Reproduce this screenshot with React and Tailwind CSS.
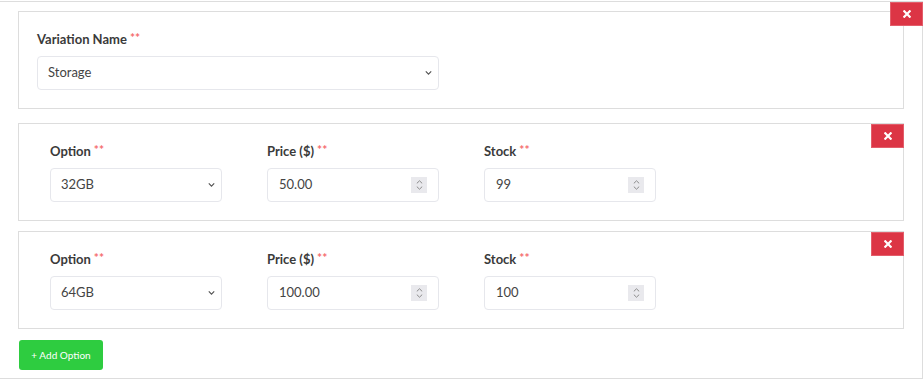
import React from 'react';

const Required = () => (
  <span className="relative top-[-2px] ml-[3px] text-[12px] font-bold text-[#f56c6c]">**</span>
);

const RemoveButton = () => (
  <button
    type="button"
    className="absolute top-0 right-[-1px] flex h-[24px] w-[33px] items-center justify-center border border-[#e35d6a] bg-[#dc3545]"
    title="Remove"
  >
    <svg width="8" height="8" viewBox="0 0 8 8">
      <path d="M1.3 1.3 L6.7 6.7 M6.7 1.3 L1.3 6.7" stroke="#fff" strokeWidth="2.2" strokeLinecap="square" />
    </svg>
  </button>
);

const Chevron = () => (
  <svg className="pointer-events-none absolute right-[6px] top-1/2 -translate-y-1/2" width="7" height="5" viewBox="0 0 7 5">
    <path d="M0.8 0.8 L3.5 3.6 L6.2 0.8" fill="none" stroke="#555" strokeWidth="1.2" />
  </svg>
);

const Spinner = () => (
  <span className="pointer-events-none absolute right-[11px] top-1/2 flex h-[16px] w-[16px] -translate-y-1/2 flex-col items-center justify-center gap-[2px] bg-[#e9e9ed]">
    <svg width="7" height="4" viewBox="0 0 7 4">
      <path d="M0.8 3.4 L3.5 0.8 L6.2 3.4" fill="none" stroke="#8a8a8a" strokeWidth="1" />
    </svg>
    <svg width="7" height="4" viewBox="0 0 7 4">
      <path d="M0.8 0.6 L3.5 3.2 L6.2 0.6" fill="none" stroke="#8a8a8a" strokeWidth="1" />
    </svg>
  </span>
);

const Label = ({ children }) => (
  <label className="mb-[8px] block h-[18px] text-[13px] font-bold leading-[18px] text-[#3a3a3a]">
    {children}
    <Required />
  </label>
);

const SelectField = ({ value, width }) => (
  <div className={`relative ${width} h-[34px] rounded-[4px] border border-[#e6e7ec] bg-white`}>
    <div className="flex h-full items-center pl-[10px] text-[13px] text-[#444]">{value}</div>
    <Chevron />
  </div>
);

const NumberField = ({ value }) => (
  <div className="relative h-[34px] w-[172px] rounded-[4px] border border-[#e6e7ec] bg-white">
    <div className="flex h-full items-center pl-[11px] text-[13px] text-[#444]">{value}</div>
    <Spinner />
  </div>
);

const OptionCard = ({ option, price, stock }) => (
  <div className="relative h-[98px] border border-[#dddddd] bg-white pl-[31px] pt-[18px]">
    <div className="grid grid-cols-[172px_172px_172px] gap-x-[45px]">
      <div>
        <Label>Option</Label>
        <SelectField value={option} width="w-[172px]" />
      </div>
      <div>
        <Label>Price ($)</Label>
        <NumberField value={price} />
      </div>
      <div>
        <Label>Stock</Label>
        <NumberField value={stock} />
      </div>
    </div>
    <RemoveButton />
  </div>
);

export default function App() {
  return (
    <div className="h-[381px] w-[923px] bg-white pt-[1px]" style={{ fontFamily: 'Lato, "Open Sans", sans-serif' }}>
      <div className="relative h-[378px] w-[923px] border-b border-r border-t border-[#dddddd] pl-[18px] pr-[18px] pt-[9px]">
        <div className="h-[98px] border border-[#dddddd] bg-white pl-[18px] pt-[18px]">
          <Label>Variation Name</Label>
          <SelectField value="Storage" width="w-[402px]" />
        </div>
        <RemoveButton />

        <div className="mt-[14px]">
          <OptionCard option="32GB" price="50.00" stock="99" />
        </div>
        <div className="mt-[10px]">
          <OptionCard option="64GB" price="100.00" stock="100" />
        </div>

        <button
          type="button"
          className="ml-[1px] mt-[11px] flex h-[30px] w-[84px] items-center justify-center rounded-[3px] bg-[#2ecc40] text-[10px] text-white"
        >
          + Add Option
        </button>
      </div>
    </div>
  );
}
